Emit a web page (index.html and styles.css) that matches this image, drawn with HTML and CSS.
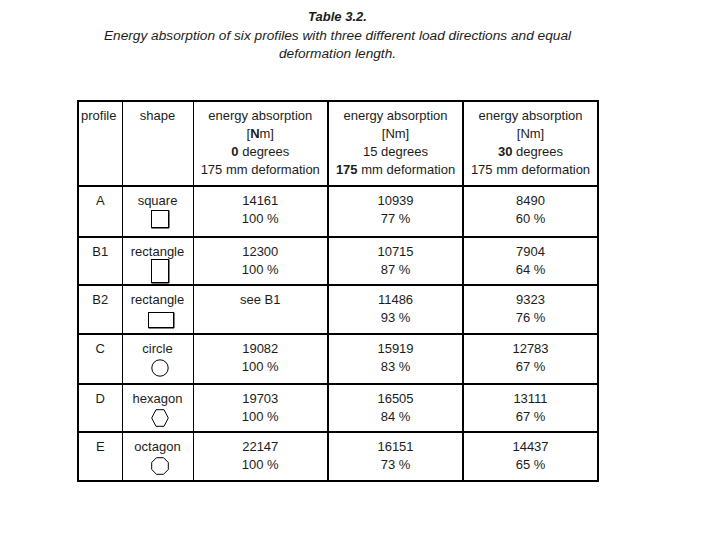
FILE: index.html
```html
<!DOCTYPE html>
<html lang="en">
<head>
<meta charset="utf-8">
<title>Table 3.2</title>
<link rel="stylesheet" href="styles.css">
</head>
<body>
<div class="page">
  <div class="caption">
    <div class="title">Table 3.2.</div>
    <div class="subtitle">Energy absorption of six profiles with three different load directions and equal<br>deformation length.</div>
  </div>
  <table class="data">
    <colgroup>
      <col class="w-profile">
      <col class="w-shape">
      <col class="w-energy">
      <col class="w-energy">
      <col class="w-energy">
    </colgroup>
    <tr class="head-row">
      <td class="c1 left">profile</td>
      <td class="c2">shape</td>
      <td class="c3">energy absorption<br>[<b>N</b>m]<br><b>0</b> degrees<br>175 mm deformation</td>
      <td class="c4">energy absorption<br>[Nm]<br>15 degrees<br><b>175</b> mm deformation</td>
      <td class="c5">energy absorption<br>[Nm]<br><b>30</b> degrees<br>175 mm deformation</td>
    </tr>
    <tr class="row r-a">
      <td class="c1">A</td>
      <td class="c2">square
        <svg class="icon icon-square" width="19" height="19" viewBox="0 0 19 19"><rect x="0.5" y="0.5" width="17" height="17" fill="none" stroke="#000" stroke-width="1"/><path d="M18 0.5 V18 H0.5" fill="none" stroke="#000" stroke-width="1"/></svg>
      </td>
      <td class="c3">14161<br>100 %</td>
      <td class="c4">10939<br>77 %</td>
      <td class="c5">8490<br>60 %</td>
    </tr>
    <tr class="row r-b1">
      <td class="c1">B1</td>
      <td class="c2">rectangle
        <svg class="icon icon-tall" width="19" height="25" viewBox="0 0 19 25"><rect x="0.5" y="0.5" width="17" height="23" fill="none" stroke="#000" stroke-width="1"/><path d="M18 0.5 V24 H0.5" fill="none" stroke="#000" stroke-width="1"/></svg>
      </td>
      <td class="c3">12300<br>100 %</td>
      <td class="c4">10715<br>87 %</td>
      <td class="c5">7904<br>64 %</td>
    </tr>
    <tr class="row r-b2">
      <td class="c1">B2</td>
      <td class="c2">rectangle
        <svg class="icon icon-wide" width="27" height="17" viewBox="0 0 27 17"><rect x="0.5" y="0.5" width="25" height="15" fill="none" stroke="#000" stroke-width="1"/><path d="M26 0.5 V16 H0.5" fill="none" stroke="#000" stroke-width="1"/></svg>
      </td>
      <td class="c3">see B1</td>
      <td class="c4">11486<br>93 %</td>
      <td class="c5">9323<br>76 %</td>
    </tr>
    <tr class="row r-c">
      <td class="c1">C</td>
      <td class="c2">circle
        <svg class="icon icon-poly" width="18" height="18" viewBox="0 0 18 18"><circle cx="9" cy="9" r="8.2" fill="none" stroke="#000" stroke-width="1"/></svg>
      </td>
      <td class="c3">19082<br>100 %</td>
      <td class="c4">15919<br>83 %</td>
      <td class="c5">12783<br>67 %</td>
    </tr>
    <tr class="row r-d">
      <td class="c1">D</td>
      <td class="c2">hexagon
        <svg class="icon icon-poly" width="18" height="18" viewBox="0 0 18 18"><polygon points="5,0.7 13,0.7 17.3,9 13,17.3 5,17.3 0.7,9" fill="none" stroke="#000" stroke-width="1"/></svg>
      </td>
      <td class="c3">19703<br>100 %</td>
      <td class="c4">16505<br>84 %</td>
      <td class="c5">13111<br>67 %</td>
    </tr>
    <tr class="row r-e">
      <td class="c1">E</td>
      <td class="c2">octagon
        <svg class="icon icon-poly" width="18" height="18" viewBox="0 0 18 18"><polygon points="5.5,0.7 12.5,0.7 17.3,5.5 17.3,12.5 12.5,17.3 5.5,17.3 0.7,12.5 0.7,5.5" fill="none" stroke="#000" stroke-width="1"/></svg>
      </td>
      <td class="c3">22147<br>100 %</td>
      <td class="c4">16151<br>73 %</td>
      <td class="c5">14437<br>65 %</td>
    </tr>
  </table>
</div>
</body>
</html>
```

FILE: styles.css
```css
html, body {
  margin: 0;
  padding: 0;
  background: #ffffff;
}

body {
  font-family: "Liberation Sans", Arial, sans-serif;
  color: #1c1c1c;
}

.page {
  padding: 8px 0 0 77px;
}

.caption {
  width: 521px;
  text-align: center;
  line-height: 18px;
}

.title {
  font-size: 13px;
  font-weight: bold;
  font-style: italic;
}

.subtitle {
  margin-top: 1px;
  font-size: 13.7px;
  font-style: italic;
  white-space: nowrap;
}

.data {
  margin-top: 37px;
  width: 521px;
  table-layout: fixed;
  border-collapse: collapse;
  border: 2px solid #000;
  font-size: 13px;
  line-height: 18px;
}

.w-profile { width: 44px; }
.w-shape { width: 71px; }
.w-energy { width: 135px; }

.data td {
  border: 2px solid #000;
  padding: 5px 0 0 0;
  vertical-align: top;
  text-align: center;
  white-space: nowrap;
}

.data td.c1 { border-right-width: 1px; }
.data td.c2 { border-left-width: 1px; border-right-width: 1px; }
.data td.c3 { border-left-width: 1px; }

.data td.left {
  text-align: left;
  padding-left: 2px;
}

.data b {
  font-weight: bold;
}

.head-row td { height: 78px; }
.r-a td { height: 44px; }
.r-b1 td { height: 41px; }
.r-b2 td { height: 42px; }
.r-c td { height: 43px; }
.r-d td { height: 41px; }
.r-e td { height: 42px; }

.icon {
  display: block;
  margin: 0 auto;
  padding-left: 5px;
}

.icon-square { margin-top: 0; }
.icon-tall { margin-top: -2px; }
.icon-wide { margin-top: 3px; padding-left: 7px; }
.icon-poly { margin-top: 1px; padding-left: 5px; }
```
